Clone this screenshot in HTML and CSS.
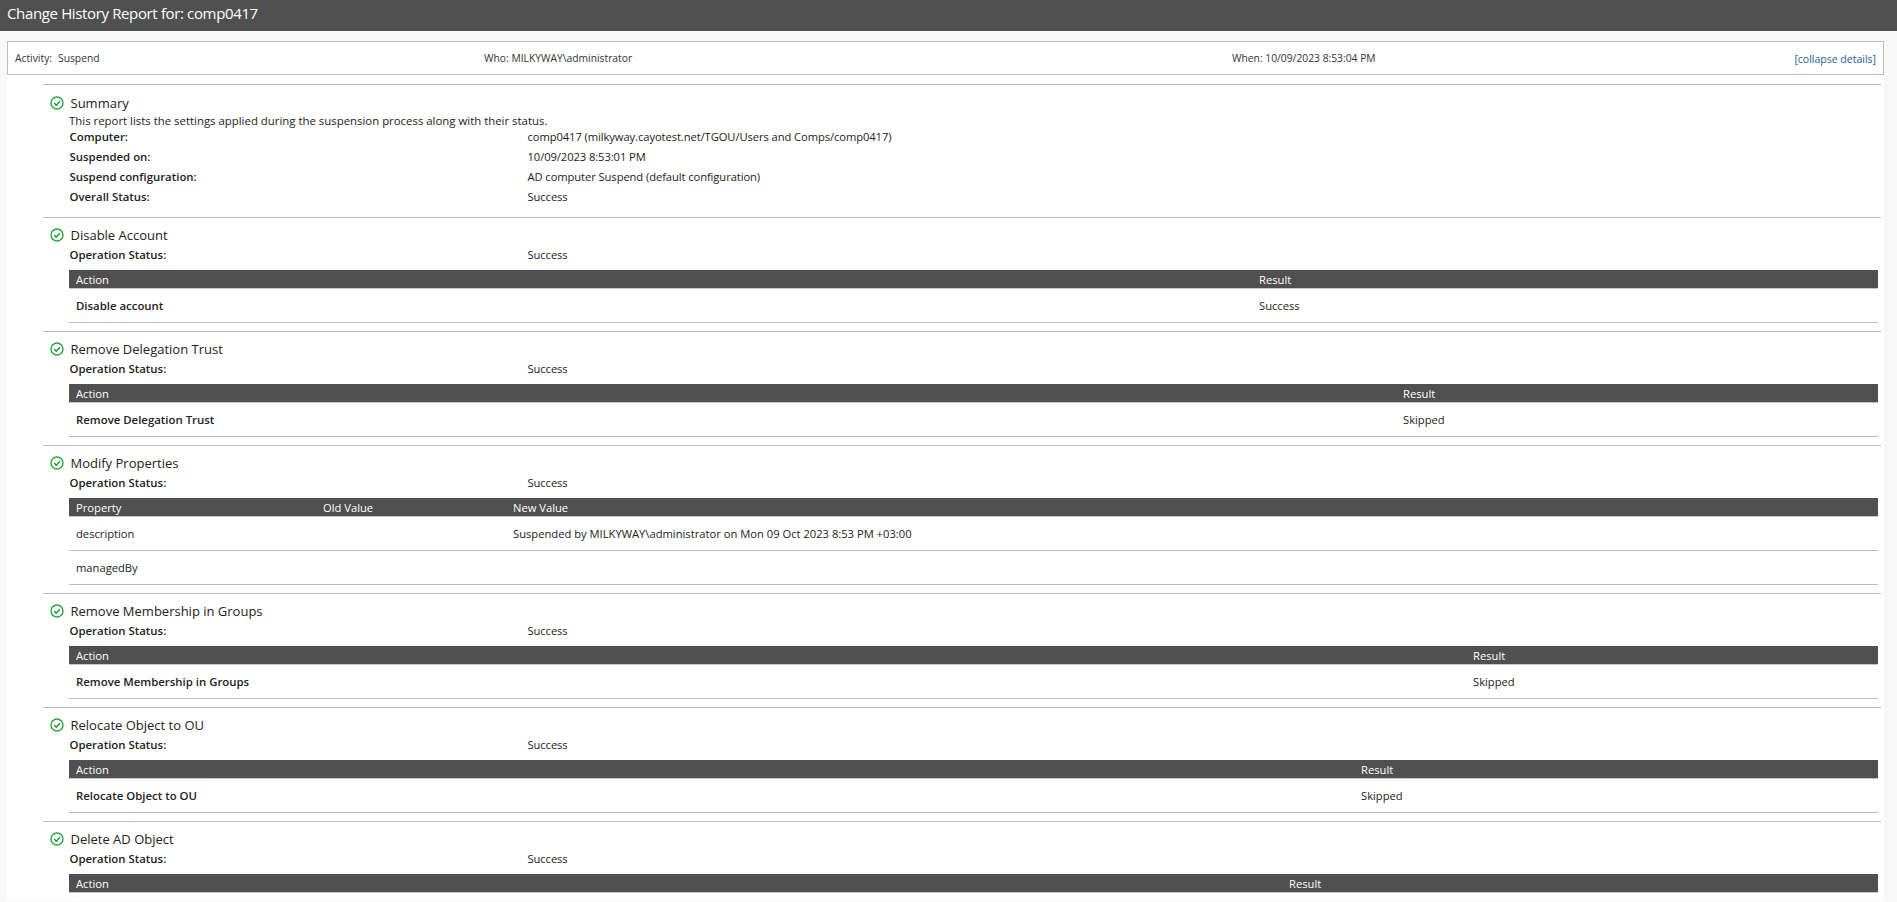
FILE: index.html
```html
<!DOCTYPE html>
<html lang="en">
<head>
<meta charset="utf-8">
<title>Change History Report</title>
<link rel="stylesheet" href="styles.css">
</head>
<body>
<svg class="sprite" width="0" height="0" aria-hidden="true"><symbol id="ok" viewBox="0 0 14 14"><circle cx="7" cy="7" r="6" fill="none" stroke="#25a83a" stroke-width="1.4"/><path d="M4.1 7.1l2.1 2.1 3.8-4" fill="none" stroke="#2a8f3a" stroke-width="1.4"/></symbol></svg>
<header class="titlebar">Change History Report for: comp0417</header>
<main class="page">
  <div class="activity">
    <span class="a-what"><span class="a-label">Activity:</span>Suspend</span>
    <span class="a-who">Who: MILKYWAY\administrator</span>
    <span class="a-when">When: 10/09/2023 8:53:04 PM</span>
    <a class="a-toggle" href="#">[collapse details]</a>
  </div>
  <div class="report">
    <section class="sec sec-first">
      <h2 class="sec-title"><svg class="ok"><use href="#ok"/></svg>Summary</h2>
      <p class="desc">This report lists the settings applied during the suspension process along with their status.</p>
      <dl class="kv"><dt>Computer:</dt><dd>comp0417 (milkyway.cayotest.net/TGOU/Users and Comps/comp0417)</dd></dl>
      <dl class="kv"><dt>Suspended on:</dt><dd>10/09/2023 8:53:01 PM</dd></dl>
      <dl class="kv"><dt>Suspend configuration:</dt><dd>AD computer Suspend (default configuration)</dd></dl>
      <dl class="kv"><dt>Overall Status:</dt><dd>Success</dd></dl>
    </section>

    <section class="sec">
      <h2 class="sec-title"><svg class="ok"><use href="#ok"/></svg>Disable Account</h2>
      <dl class="kv"><dt>Operation Status:</dt><dd>Success</dd></dl>
      <table class="grid"><colgroup><col class="c-disable"><col></colgroup>
        <thead><tr><th>Action</th><th>Result</th></tr></thead>
        <tbody><tr><td class="b">Disable account</td><td>Success</td></tr></tbody>
      </table>
    </section>

    <section class="sec">
      <h2 class="sec-title"><svg class="ok"><use href="#ok"/></svg>Remove Delegation Trust</h2>
      <dl class="kv"><dt>Operation Status:</dt><dd>Success</dd></dl>
      <table class="grid"><colgroup><col class="c-deleg"><col></colgroup>
        <thead><tr><th>Action</th><th>Result</th></tr></thead>
        <tbody><tr><td class="b">Remove Delegation Trust</td><td>Skipped</td></tr></tbody>
      </table>
    </section>

    <section class="sec">
      <h2 class="sec-title"><svg class="ok"><use href="#ok"/></svg>Modify Properties</h2>
      <dl class="kv"><dt>Operation Status:</dt><dd>Success</dd></dl>
      <table class="grid"><colgroup><col class="c-prop"><col class="c-old"><col></colgroup>
        <thead><tr><th>Property</th><th>Old Value</th><th>New Value</th></tr></thead>
        <tbody>
          <tr><td>description</td><td></td><td>Suspended by MILKYWAY\administrator on Mon 09 Oct 2023 8:53 PM +03:00</td></tr>
          <tr><td>managedBy</td><td></td><td></td></tr>
        </tbody>
      </table>
    </section>

    <section class="sec">
      <h2 class="sec-title"><svg class="ok"><use href="#ok"/></svg>Remove Membership in Groups</h2>
      <dl class="kv"><dt>Operation Status:</dt><dd>Success</dd></dl>
      <table class="grid"><colgroup><col class="c-member"><col></colgroup>
        <thead><tr><th>Action</th><th>Result</th></tr></thead>
        <tbody><tr><td class="b">Remove Membership in Groups</td><td>Skipped</td></tr></tbody>
      </table>
    </section>

    <section class="sec">
      <h2 class="sec-title"><svg class="ok"><use href="#ok"/></svg>Relocate Object to OU</h2>
      <dl class="kv"><dt>Operation Status:</dt><dd>Success</dd></dl>
      <table class="grid"><colgroup><col class="c-reloc"><col></colgroup>
        <thead><tr><th>Action</th><th>Result</th></tr></thead>
        <tbody><tr><td class="b">Relocate Object to OU</td><td>Skipped</td></tr></tbody>
      </table>
    </section>

    <section class="sec">
      <h2 class="sec-title"><svg class="ok"><use href="#ok"/></svg>Delete AD Object</h2>
      <dl class="kv"><dt>Operation Status:</dt><dd>Success</dd></dl>
      <table class="grid"><colgroup><col class="c-del"><col></colgroup>
        <thead><tr><th>Action</th><th>Result</th></tr></thead>
      </table>
    </section>
  </div>
</main>
</body>
</html>
```
FILE: styles.css
```css
html, body { margin: 0; padding: 0; height: 902px; overflow: hidden; }
body { background: #f8f8f8; color: #222; font: 11.2px/16px "Open Sans", sans-serif; }
.sprite { position: absolute; }
.titlebar { height: 31px; background: #505050; color: #fff; font-size: 15px; letter-spacing: -0.36px; line-height: 26px; padding-left: 7px; box-sizing: border-box; }
.page { margin: 10px 13px 0 7px; background: #fff; }
.activity { height: 34px; box-sizing: border-box; border: 1px solid #bdbdbd; display: flex; align-items: center; font-size: 10.3px; color: #333; background: #fff; }
.a-what { width: 476px; padding-left: 7px; box-sizing: border-box; }
.a-label { margin-right: 6px; }
.a-who { width: 748px; }
.a-when { flex: 1; }
.a-toggle { color: #1f5c99; font-size: 10.5px; text-decoration: none; margin-right: 7px; position: relative; top: 1px; }
.report { padding: 9px 3px 0 36px; }
.sec { border-top: 1px solid #bdbdbd; padding: 7px 0 8px; }
.sec-first { padding: 8px 0 10px; }
.sec-title { margin: 0; height: 20px; display: flex; align-items: center; font-size: 13px; font-weight: 400; line-height: 20px; color: #222; padding-left: 7px; }
.ok { width: 14px; height: 14px; margin-right: 6.5px; flex: none; }
.desc { margin: 0 0 0 26px; height: 14px; line-height: 16px; font-size: 11.4px; }
.kv { margin: 0 0 0 26.5px; height: 20px; display: flex; line-height: 20px; }
.kv dt { width: 458px; font-weight: 600; font-size: 11.4px; flex: none; }
.kv dd { margin: 0; letter-spacing: -0.08px; }
.grid { width: 1809px; margin: 5px 0 0 26px; border-collapse: collapse; table-layout: fixed; }
.grid th { height: 18px; padding: 0 7px; vertical-align: bottom; background: #505050; color: #fff; font-weight: 400; text-align: left; border-bottom: 1px solid #c4c4c4; }
.grid td { height: 33px; padding: 0 7px; border-bottom: 1px solid #bdbdbd; }
.grid .b { font-weight: 600; font-size: 11.4px; }
.c-disable { width: 1183px; }
.c-deleg { width: 1327px; }
.c-prop { width: 247px; }
.c-old { width: 190px; }
.c-member { width: 1397px; }
.c-reloc { width: 1285px; }
.c-del { width: 1213px; }
```
